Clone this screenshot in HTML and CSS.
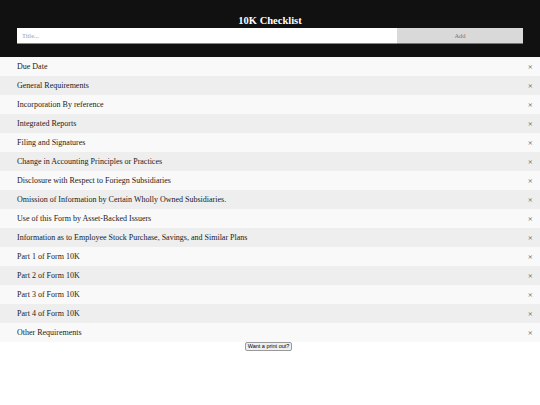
FILE: index.html
```html
<!DOCTYPE html>
<html>
<head>
<meta charset="utf-8">
<link rel="stylesheet" href="styles.css">
</head>
<body>
<div class="header">
  <h2 class="title">10K Checklist</h2>
  <div class="form">
    <input class="field" type="text" placeholder="Title...">
    <span class="add">Add</span>
  </div>
</div>
<ul class="list">
  <li class="item">Due Date<span class="close">×</span></li>
  <li class="item">General Requirements<span class="close">×</span></li>
  <li class="item">Incorporation By reference<span class="close">×</span></li>
  <li class="item">Integrated Reports<span class="close">×</span></li>
  <li class="item">Filing and Signatures<span class="close">×</span></li>
  <li class="item">Change in Accounting Principles or Practices<span class="close">×</span></li>
  <li class="item">Disclosure with Respect to Foriegn Subsidiaries<span class="close">×</span></li>
  <li class="item">Omission of Information by Certain Wholly Owned Subsidiaries.<span class="close">×</span></li>
  <li class="item">Use of this Form by Asset-Backed Issuers<span class="close">×</span></li>
  <li class="item">Information as to Employee Stock Purchase, Savings, and Similar Plans<span class="close">×</span></li>
  <li class="item">Part 1 of Form 10K<span class="close">×</span></li>
  <li class="item">Part 2 of Form 10K<span class="close">×</span></li>
  <li class="item">Part 3 of Form 10K<span class="close">×</span></li>
  <li class="item">Part 4 of Form 10K<span class="close">×</span></li>
  <li class="item">Other Requirements<span class="close">×</span></li>
</ul>
<div class="print-wrap"><button class="print">Want a print out?</button></div>
</body>
</html>
```
FILE: styles.css
```css
html, body { margin: 0; padding: 0; background: #fff; }
body { font-family: "Liberation Serif", "Times New Roman", serif; }
.header {
  background: #111;
  padding: 15px 17px 12px 17px;
  height: 30px;
}
.title {
  margin: 0;
  color: #fff;
  font-size: 10.5px;
  font-weight: bold;
  text-align: center;
  line-height: 11px;
  height: 13px;
}
.form { display: flex; height: 16px; }
.field {
  box-sizing: border-box;
  flex: 0 0 380px;
  height: 16px;
  margin: 0;
  border: none;
  border-bottom: 1px solid #888;
  padding: 0 5px;
  font-family: "Liberation Serif", serif;
  font-size: 6.5px;
  background: #fff;
  outline: none;
}
.field::placeholder { color: #999; }
.add {
  box-sizing: border-box;
  flex: 0 0 126px;
  height: 16px;
  background: #d9d9d9;
  border-bottom: 1px solid #777;
  color: #777;
  font-size: 6.5px;
  text-align: center;
  line-height: 15px;
}
.list { list-style: none; margin: 0; padding: 0; }
.item {
  display: flex;
  justify-content: space-between;
  align-items: center;
  height: 19px;
  padding: 0 7px 0 17px;
  font-size: 8px;
  color: #1a1a1a;
  background: #f9f9f9;
}
.item:nth-child(even) { background: #eee; }
.close { font-family: "DejaVu Sans", sans-serif; font-size: 6.5px; color: #666; }
.print-wrap { text-align: center; line-height: 0; }
.print {
  margin: 0 0 0 -3px;
  padding: 0 2px;
  height: 9px;
  font-family: "Liberation Sans", Arial, sans-serif;
  font-size: 5.5px;
  line-height: 7px;
  border: 1px solid #999;
  border-radius: 2px;
  background: #efefef;
  color: #000;
  vertical-align: top;
}
```
